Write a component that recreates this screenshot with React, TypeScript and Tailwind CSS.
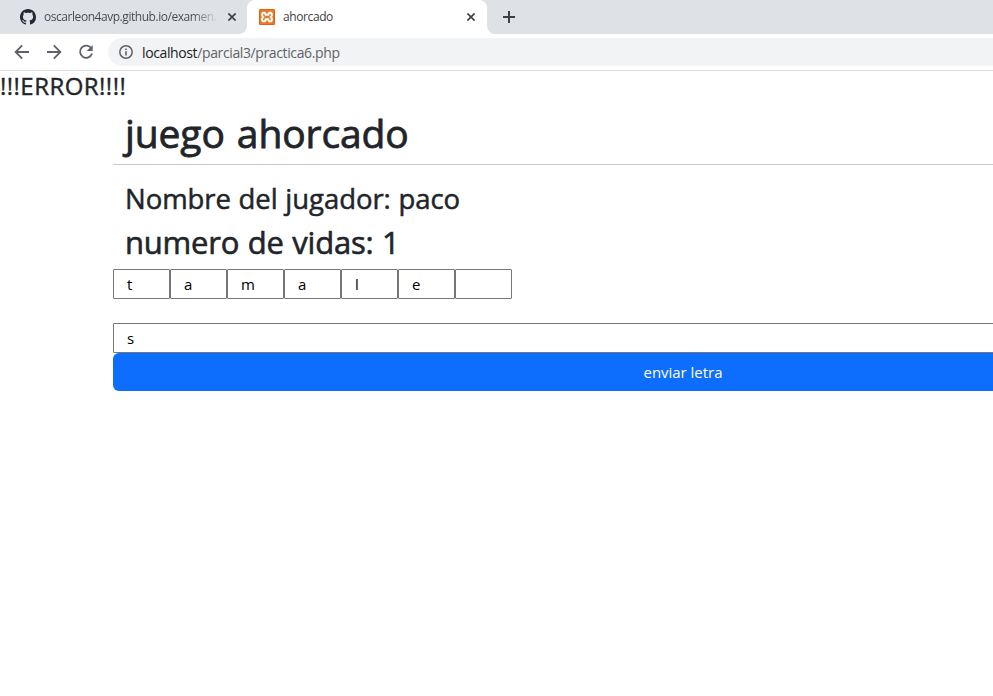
import type { ReactNode } from "react";

const LETTERS = ["t", "a", "m", "a", "l", "e", ""];

function GithubMark() {
  return (
    <svg width="16" height="16" viewBox="0 0 16 16" fill="#24292f" className="shrink-0">
      <path d="M8 0C3.58 0 0 3.58 0 8c0 3.54 2.29 6.53 5.47 7.59.4.07.55-.17.55-.38 0-.19-.01-.82-.01-1.49-2.01.37-2.53-.49-2.69-.94-.09-.23-.48-.94-.82-1.13-.28-.15-.68-.52-.01-.53.63-.01 1.08.58 1.23.82.72 1.21 1.87.87 2.33.66.07-.52.28-.87.51-1.07-1.78-.2-3.64-.89-3.64-3.95 0-.87.31-1.59.82-2.15-.08-.2-.36-1.02.08-2.12 0 0 .67-.21 2.2.82.64-.18 1.32-.27 2-.27s1.36.09 2 .27c1.53-1.04 2.2-.82 2.2-.82.44 1.1.16 1.92.08 2.12.51.56.82 1.27.82 2.15 0 3.07-1.87 3.75-3.65 3.95.29.25.54.73.54 1.48 0 1.07-.01 1.93-.01 2.2 0 .21.15.46.55.38A8.01 8.01 0 0 0 16 8c0-4.42-3.58-8-8-8z" />
    </svg>
  );
}

function XamppMark() {
  return (
    <svg width="16" height="16" viewBox="0 0 16 16" className="shrink-0">
      <rect width="16" height="16" rx="1.5" fill="#ee7a25" />
      <rect x="0.5" y="0.5" width="15" height="15" rx="1" fill="none" stroke="#d9640f" />
      <path
        d="M5 3.8C3.4 3.8 2.8 5 3.1 6.2c.2.9.8 1.3 1.3 1.8-.8.5-1.4 1.2-1.4 2.2 0 1.3.8 2.2 2 2.2 1.3 0 1.6-1.2 1.6-2.2h2.8c0 1 .4 2.2 1.6 2.2s2-.9 2-2.2c0-1-.6-1.7-1.4-2.2.5-.5 1.1-.9 1.3-1.8.3-1.2-.3-2.4-1.9-2.4-1.2 0-1.6 1-1.6 2H6.600C6.600 4.800 6.200 3.800 5 3.800Z"
        fill="none"
        stroke="#fff"
        strokeWidth="1.9"
        strokeLinejoin="round"
      />
    </svg>
  );
}

function Close() {
  return (
    <svg width="8" height="8" viewBox="0 0 8 8" fill="none" stroke="#3c4043" strokeWidth="1.6" className="shrink-0">
      <path d="M.4.4l7.200 7.200M7.600.4L.4 7.600" />
    </svg>
  );
}

function NavIcon({ children }: { children: ReactNode }) {
  return (
    <svg width="16" height="16" viewBox="0 0 16 16" fill="none" stroke="#5f6368" strokeWidth="1.800" className="shrink-0">
      {children}
    </svg>
  );
}

function TabStrip() {
  return (
    <div className="flex h-[34px] bg-[#dee1e6] text-[12px]">
      <div className="flex w-[247px] items-center rounded-br-lg pl-5">
        <GithubMark />
        <span className="ml-2 w-[174px] whitespace-nowrap bg-gradient-to-r from-[#45494d] from-85% to-[#dee1e6] bg-clip-text text-[12px] tracking-[-0.45px] text-transparent">
          oscarleon4avp.github.io/examen.
        </span>
        <span className="ml-[10px]">
          <Close />
        </span>
      </div>
      <div className="relative flex w-60 items-center rounded-t-lg bg-white pl-3">
        <svg width="8" height="8" className="absolute -left-2 bottom-0" fill="#fff">
          <path d="M8 0v8H0A8 8 0 0 0 8 0z" />
        </svg>
        <XamppMark />
        <span className="ml-2 flex-1 text-[12px] tracking-[-0.4px] text-[#3c4043]">ahorcado</span>
        <span className="mr-3">
          <Close />
        </span>
        <svg width="8" height="8" className="absolute -right-2 bottom-0" fill="#fff">
          <path d="M0 0v8h8A8 8 0 0 1 0 0z" />
        </svg>
      </div>
      <svg width="12" height="12" viewBox="0 0 12 12" className="ml-4 mt-[11px]" stroke="#3c4043" strokeWidth="2">
        <path d="M6 0v12M0 6h12" />
      </svg>
    </div>
  );
}

function Toolbar() {
  return (
    <div className="flex h-[37px] items-center border-b border-[#dadce0] bg-white pl-[14px]">
      <div className="flex gap-4">
        <NavIcon>
          <path d="M15 8H2M8.200 1.400L1.600 8l6.600 6.600" />
        </NavIcon>
        <NavIcon>
          <path d="M1 8h13M7.800 1.400L14.400 8l-6.600 6.600" />
        </NavIcon>
        <NavIcon>
          <path d="M13.400 4.600A6.100 6.100 0 1 0 14 9.500" />
          <path d="M14.700 1v6H8.700z" fill="#5f6368" stroke="none" />
        </NavIcon>
      </div>
      <div className="ml-[14px] flex h-7 flex-1 items-center rounded-l-full bg-[#f1f3f4] pl-[11px]">
        <svg width="14" height="14" viewBox="0 0 14 14" className="shrink-0">
          <circle cx="7" cy="7" r="6.200" fill="none" stroke="#5f6368" strokeWidth="1.500" />
          <path d="M6.200 6.200h1.600v4.300H6.200zM6.200 3.500h1.600v1.600H6.200z" fill="#5f6368" />
        </svg>
        <span className="ml-[9px] whitespace-nowrap text-[14px] tracking-[-0.38px] text-[#5f6368]">
          <span className="text-[#202124]">localhost</span>/parcial3/practica6.php
        </span>
      </div>
    </div>
  );
}

export default function App() {
  return (
    <div className="h-[696px] w-[993px] overflow-hidden bg-white font-['Open_Sans','Noto_Sans',sans-serif] text-[#212529]">
      <TabStrip />
      <Toolbar />
      <h4 className="mb-[6px] text-[24px] font-medium leading-[30.8px] tracking-[0.45px] [-webkit-text-stroke:0.4px]">
        !!!ERROR!!!!
      </h4>
      <main className="ml-[113px] w-[1140px]">
        <h1 className="mb-[6px] px-3 text-[39px] font-medium leading-[50px] tracking-[-0.1px] [word-spacing:2px] [-webkit-text-stroke:0.8px]">
          juego ahorcado
        </h1>
        <hr className="mb-4 border-t border-[#c8c9ca]" />
        <h3 className="mb-[6px] px-3 text-[27.5px] font-medium leading-[35.6px] tracking-[-0.04px] [word-spacing:0.5px] [-webkit-text-stroke:0.5px]">
          Nombre del jugador: paco
        </h3>
        <h2 className="mb-[6px] px-3 text-[31px] font-medium leading-[40.4px] tracking-[-0.2px] [word-spacing:0.7px] [-webkit-text-stroke:0.6px]">
          numero de vidas: 1
        </h2>
        <div className="flex">
          {LETTERS.map((letter, i) => (
            <div
              key={i}
              className="h-[30px] w-[57px] rounded-[1px] border border-[#767676] pl-[13px] text-[15px] leading-[28px] text-black"
            >
              {letter}
            </div>
          ))}
        </div>
        <div className="mt-6 h-[30px] rounded-[1px] border border-[#767676] pl-[13px] text-[15px] leading-[28px] text-black">s</div>
        <button className="block h-[38px] w-full rounded-md bg-[#0d6efd] text-[15px] leading-[38px] tracking-[-0.03px] text-white">
          enviar letra
        </button>
      </main>
    </div>
  );
}
